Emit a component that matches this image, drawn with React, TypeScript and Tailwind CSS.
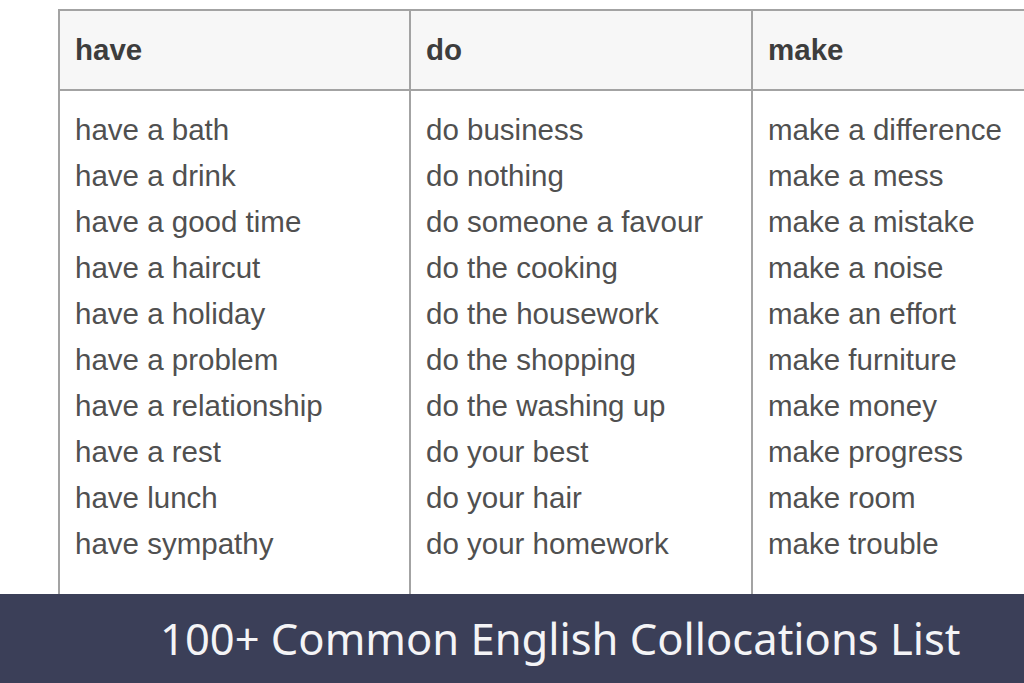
const columns = [
  {
    head: 'have',
    width: 'w-[351px]',
    items: [
      'have a bath',
      'have a drink',
      'have a good time',
      'have a haircut',
      'have a holiday',
      'have a problem',
      'have a relationship',
      'have a rest',
      'have lunch',
      'have sympathy',
    ],
  },
  {
    head: 'do',
    width: 'w-[342px]',
    items: [
      'do business',
      'do nothing',
      'do someone a favour',
      'do the cooking',
      'do the housework',
      'do the shopping',
      'do the washing up',
      'do your best',
      'do your hair',
      'do your homework',
    ],
  },
  {
    head: 'make',
    width: 'w-[340px]',
    items: [
      'make a difference',
      'make a mess',
      'make a mistake',
      'make a noise',
      'make an effort',
      'make furniture',
      'make money',
      'make progress',
      'make room',
      'make trouble',
    ],
  },
];

export default function App() {
  return (
    <div className="w-[1024px] h-[683px] bg-white overflow-hidden flex flex-col font-['Liberation_Sans']">
      {/* table area */}
      <div className="h-[594px] overflow-hidden pt-[9px] pl-[58px]">
        <div className="flex border-l-2 border-t-2 border-[#a3a3a3] w-max">
          {columns.map((col) => (
            <div key={col.head} className={`${col.width} shrink-0 flex flex-col border-r-2 border-[#a3a3a3]`}>
              <div className="h-[80px] bg-[#f7f7f7] border-b-2 border-[#a3a3a3] flex items-center pl-[15px]">
                <span className="text-[29.5px] font-bold text-[#3d3d3d]">{col.head}</span>
              </div>
              <div className="pt-[16px] pb-[40px] pl-[15px]">
                {col.items.map((it) => (
                  <div key={it} className="h-[46px] leading-[46px] text-[29.5px] text-[#505050] whitespace-nowrap">
                    {it}
                  </div>
                ))}
              </div>
            </div>
          ))}
        </div>
      </div>

      {/* banner */}
      <div className="h-[89px] bg-[#3b3f58] flex items-center pl-[160px]">
        <span className="text-[43.5px] text-[#f4f4f6] font-['Noto_Sans'] leading-none">
          100+ Common English Collocations List
        </span>
      </div>
    </div>
  );
}
